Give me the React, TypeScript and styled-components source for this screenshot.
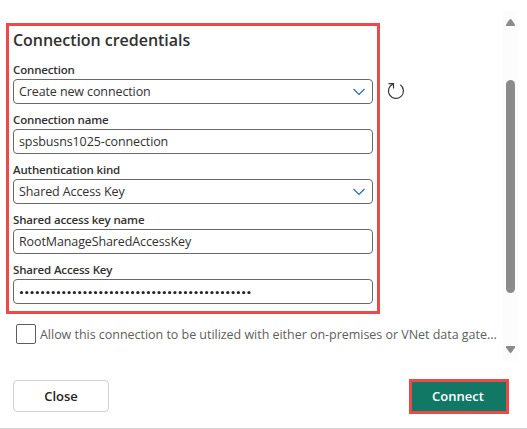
import React from 'react';
import styled, { createGlobalStyle } from 'styled-components';

const GlobalStyle = createGlobalStyle`
  * { box-sizing: border-box; }
  html, body { margin: 0; padding: 0; overflow: hidden; background: #fff; }
  body { font-family: "Open Sans", "Noto Sans", sans-serif; color: #323130; }
`;

const Dialog = styled.main`
  width: 527px;
  height: 429px;
  display: flex;
  flex-direction: column;
  background: #fff;
  border-bottom: 1px solid #d4d4d4;
`;

const Body = styled.div`
  height: 361px;
  padding: 11px 9px 0 6px;
  display: flex;
  justify-content: space-between;
`;

const Content = styled.div`
  padding-top: 12px;
  width: 494px;
`;

const TopRow = styled.div`
  display: flex;
`;

const Highlight = styled.section`
  width: 374px;
  height: 291px;
  border: 3px solid #eb4a46;
  padding: 4px 4px 0;
`;

const Title = styled.h1`
  margin: 0;
  height: 24px;
  font-size: 16px;
  font-weight: 600;
  line-height: 20px;
  letter-spacing: -0.04px;
  white-space: nowrap;
`;

const Field = styled.div`
  height: 50px;
  padding-top: 7px;
`;

const Label = styled.label`
  display: block;
  height: 18px;
  line-height: 17px;
  font-size: 11.5px;
  font-weight: 600;
  letter-spacing: -0.16px;
  white-space: nowrap;
`;

const Control = styled.div`
  height: 25px;
  border: 1px solid #6b6967;
  border-radius: 4px;
  padding: 0 7px 0 5px;
  display: flex;
  align-items: center;
  justify-content: space-between;
  font-size: 12.5px;
  line-height: 23px;
  letter-spacing: -0.11px;
  white-space: nowrap;
`;

const Dots = styled.svg`
  display: block;
  fill: #292827;
`;

const RefreshButton = styled.button`
  margin: 59px 0 0 7px;
  width: 18px;
  height: 18px;
  padding: 0;
  border: 0;
  background: none;
  display: flex;
`;

const CheckRow = styled.label`
  display: flex;
  align-items: center;
  height: 20px;
  margin: 10px 0 0 10px;
  font-size: 12.5px;
  color: #605e5c;
  white-space: nowrap;
`;

const Checkbox = styled.span`
  width: 20px;
  height: 20px;
  border: 1px solid #605e5c;
  border-radius: 2px;
  margin-right: 4px;
  flex: none;
`;

const CheckText = styled.span`
  letter-spacing: -0.03px;
`;

const ScrollTrack = styled.div`
  width: 15px;
  height: 350px;
  padding: 8px 3px 0;
  background: #fcfcfc;
  display: flex;
  flex-direction: column;
`;

const Arrow = styled.svg`
  display: block;
  width: 9px;
  height: 7px;
  fill: #8b8b8b;
`;

const Thumb = styled.div`
  width: 9px;
  height: 213px;
  margin: 54px 0 53px;
  border-radius: 5px;
  background: #8b8b8b;
`;

const Footer = styled.footer`
  display: flex;
  justify-content: space-between;
  align-items: flex-start;
  padding: 18px 18px 0 13px;
`;

const Button = styled.button<{ $primary?: boolean }>`
  font: 600 13px/20px "Open Sans", sans-serif;
  padding: ${(p) => (p.$primary ? '0 2px 2px 0' : '0')};
  width: ${(p) => (p.$primary ? 100 : 96)}px;
  height: ${(p) => (p.$primary ? 35 : 32)}px;
  margin-top: ${(p) => (p.$primary ? 0 : 1)}px;
  border: ${(p) => (p.$primary ? '3px solid #eb4a46' : '1px solid #d1d1d1')};
  border-radius: ${(p) => (p.$primary ? 0 : 4)}px;
  background: ${(p) => (p.$primary ? '#117865' : '#fff')};
  color: ${(p) => (p.$primary ? '#fff' : '#242424')};
`;

const Chevron = () => (
  <svg width="12" height="8" viewBox="0 0 12 8" fill="none" stroke="#23689f" strokeWidth="1.1">
    <path d="M.5 1 6 6.5 11.5 1" />
  </svg>
);

interface FieldData {
  label: string;
  value?: string;
  select?: boolean;
  masked?: number;
}

const fields: FieldData[] = [
  { label: 'Connection', value: 'Create new connection', select: true },
  { label: 'Connection name', value: 'spsbusns1025-connection' },
  { label: 'Authentication kind', value: 'Shared Access Key', select: true },
  { label: 'Shared access key name', value: 'RootManageSharedAccessKey' },
  { label: 'Shared Access Key', masked: 44 },
];

const Masked = ({ count }: { count: number }) => (
  <Dots width="240" height="5" viewBox="0 0 240 5">
    {Array.from({ length: count }, (_, i) => (
      <circle key={i} cx={2.5 + i * 5.29} cy="3.5" r="1.6" />
    ))}
  </Dots>
);

export default function App() {
  return (
    <>
      <GlobalStyle />
      <Dialog>
        <Body>
          <Content>
            <TopRow>
              <Highlight>
                <Title>Connection credentials</Title>
                {fields.map((f) => (
                  <Field key={f.label}>
                    <Label>{f.label}</Label>
                    <Control>
                      {f.masked ? <Masked count={f.masked} /> : <span>{f.value}</span>}
                      {f.select && <Chevron />}
                    </Control>
                  </Field>
                ))}
              </Highlight>
              <RefreshButton aria-label="Refresh">
                <svg width="18" height="18" viewBox="0 0 18 18" fill="none" stroke="#3b3a39" strokeWidth="1.2">
                  <path d="M1.5 1.6H6.5V6.6M6.3 1.9A7.5 7.5 0 1 0 13.3 2.8" />
                </svg>
              </RefreshButton>
            </TopRow>
            <CheckRow>
              <Checkbox />
              <CheckText>Allow this connection to be utilized with either on-premises or VNet data gate...</CheckText>
            </CheckRow>
          </Content>
          <ScrollTrack>
            <Arrow viewBox="0 0 9 7"><path d="M0 7V5.5L3.5.5Q4.5-.3 5.5.5L9 5.5V7Z" /></Arrow>
            <Thumb />
            <Arrow viewBox="0 0 9 7"><path d="M0 0V1.5L3.5 6.5Q4.5 7.3 5.5 6.5L9 1.5V0Z" /></Arrow>
          </ScrollTrack>
        </Body>
        <Footer>
          <Button>Close</Button>
          <Button $primary>Connect</Button>
        </Footer>
      </Dialog>
    </>
  );
}
